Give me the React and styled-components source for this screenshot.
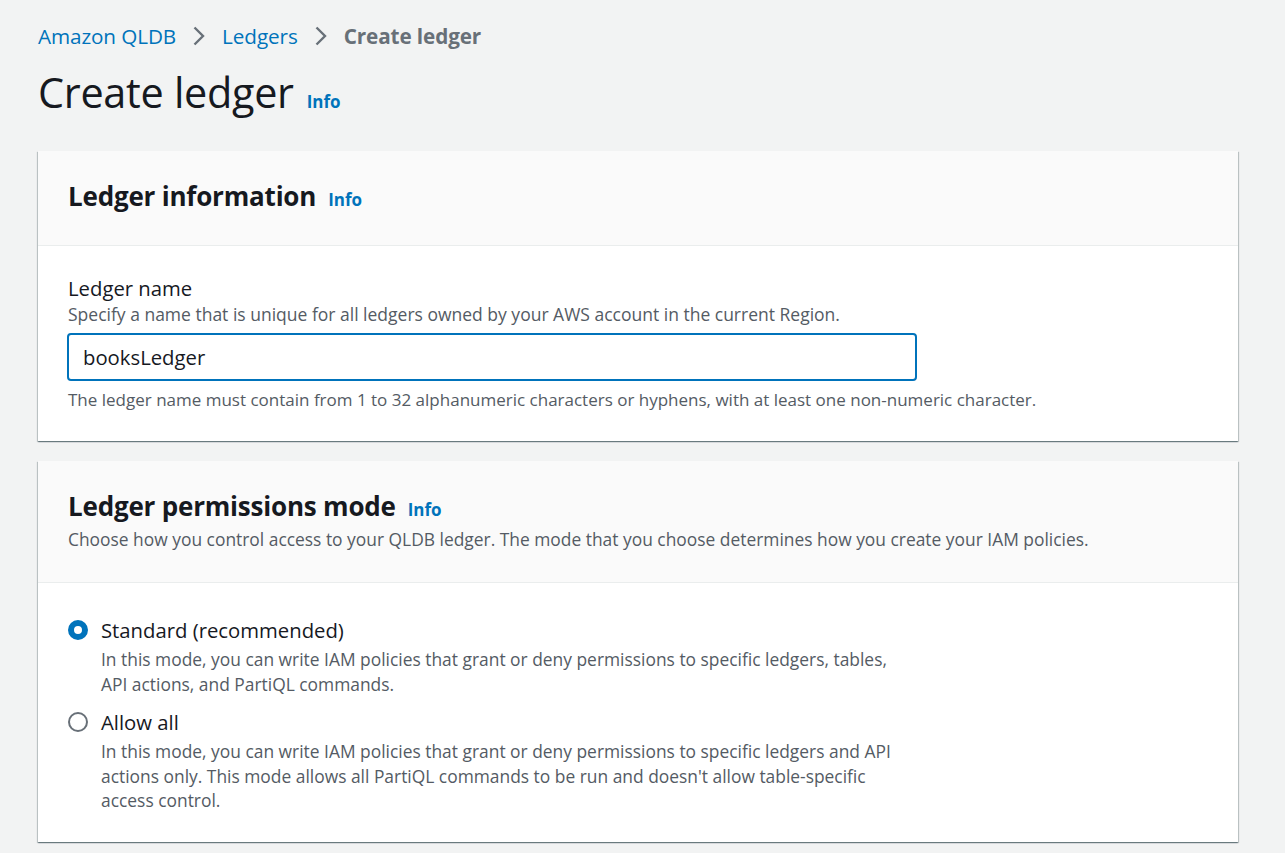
import React from "react";
import styled, { createGlobalStyle } from "styled-components";

const Global = createGlobalStyle`
  html, body { margin: 0; padding: 0; background: #f2f3f3; }
  body { font-family: "Open Sans", "Noto Sans", sans-serif; color: #16191f; -webkit-font-smoothing: antialiased; }
  * { box-sizing: border-box; }
`;

const Page = styled.div`
  padding: 21px 47px 12px 38px;
  display: flex;
  flex-direction: column;
`;

const Crumbs = styled.nav`
  display: flex;
  align-items: center;
  gap: 16px;
  height: 30px;
  font-size: 20.7px;
  letter-spacing: -0.1px;
`;

const CrumbLink = styled.a`
  color: #0073bb;
  text-decoration: none;
`;

const CrumbCurrent = styled.span`
  color: #687078;
  font-weight: 700;
`;

const Chevron = () => (
  <svg width="14" height="22" viewBox="0 0 14 22" fill="none">
    <polyline points="2.5,2.5 11,11 2.5,19.5" stroke="#687078" strokeWidth="2.4" strokeLinejoin="miter" />
  </svg>
);

const TitleRow = styled.div`
  display: flex;
  align-items: baseline;
  gap: 13px;
  margin-top: 13px;
  margin-bottom: 31px;
`;

const H1 = styled.h1`
  margin: 0;
  font-size: 41.4px;
  font-weight: 400;
  line-height: 56px;
  letter-spacing: -0.3px;
  color: #16191f;
`;

const Info = styled.a`
  color: #0073bb;
  font-weight: 700;
  font-size: 17px;
  text-decoration: none;
`;

const Card = styled.section`
  background: #fff;
  box-shadow: 0 1px 1px 0 rgba(0, 28, 36, 0.35), 1px 1px 1px 0 rgba(0, 28, 36, 0.18),
    -1px 1px 1px 0 rgba(0, 28, 36, 0.18);
  margin-bottom: 20px;
`;

const CardHeader = styled.header`
  background: #fafafa;
  border-bottom: 1px solid #eaeded;
  padding: ${(p) => p.$pad};
`;

const HeaderRow = styled.div`
  display: flex;
  align-items: baseline;
  gap: 12px;
`;

const H2 = styled.h2`
  margin: 0;
  font-size: 26px;
  font-weight: 700;
  line-height: 34px;
  letter-spacing: -0.2px;
`;

const HeaderDesc = styled.p`
  margin: 0;
  margin-top: 4px;
  font-size: 17.4px;
  line-height: 25px;
  color: #545b64;
`;

const CardBody = styled.div`
  padding: ${(p) => p.$pad};
`;

const Label = styled.label`
  display: block;
  font-size: 20.3px;
  line-height: 28px;
  color: #16191f;
`;

const Desc = styled.div`
  font-size: ${(p) => p.$size || "17.5px"};
  line-height: 25px;
  color: #545b64;
`;

const Input = styled.input`
  display: block;
  width: 850px;
  height: 48px;
  margin: 6px 0 6px -1px;
  padding: 0 14px;
  border: 2px solid #0073bb;
  border-radius: 4px;
  font-family: inherit;
  font-size: 20.3px;
  color: #16191f;
  outline: none;
  background: #fff;
`;

const RadioGroup = styled.div`
  display: flex;
  flex-direction: column;
  gap: 11px;
`;

const RadioItem = styled.div`
  display: grid;
  grid-template-columns: 20px 802px;
  column-gap: 13px;
`;

const RadioDot = styled.span`
  width: 20px;
  height: 20px;
  border-radius: 50%;
  margin-top: 5px;
  border: ${(p) => (p.$checked ? "6px solid #0073bb" : "2px solid #687078")};
  background: #fff;
`;

const RadioText = styled.div`
  display: flex;
  flex-direction: column;
`;

const RadioLabel = styled.span`
  font-size: 20.3px;
  line-height: 30px;
  color: #16191f;
`;

const RadioDesc = styled.span`
  margin-top: 2px;
  font-size: 17.4px;
  line-height: 24.5px;
  color: #545b64;
`;

export default function App() {
  return (
    <>
      <Global />
      <Page>
        <Crumbs>
          <CrumbLink href="#">Amazon QLDB</CrumbLink>
          <Chevron />
          <CrumbLink href="#">Ledgers</CrumbLink>
          <Chevron />
          <CrumbCurrent>Create ledger</CrumbCurrent>
        </Crumbs>
        <TitleRow>
          <H1>Create ledger</H1>
          <Info href="#">Info</Info>
        </TitleRow>

        <Card>
          <CardHeader $pad="28px 30px 32px">
            <HeaderRow>
              <H2>Ledger information</H2>
              <Info href="#">Info</Info>
            </HeaderRow>
          </CardHeader>
          <CardBody $pad="28px 30px 29px">
            <Label>Ledger name</Label>
            <Desc>Specify a name that is unique for all ledgers owned by your AWS account in the current Region.</Desc>
            <Input defaultValue="booksLedger" />
            <Desc $size="17px">
              The ledger name must contain from 1 to 32 alphanumeric characters or hyphens, with at least one
              non-numeric character.
            </Desc>
          </CardBody>
        </Card>

        <Card>
          <CardHeader $pad="28px 30px 30px">
            <HeaderRow>
              <H2>Ledger permissions mode</H2>
              <Info href="#">Info</Info>
            </HeaderRow>
            <HeaderDesc>
              Choose how you control access to your QLDB ledger. The mode that you choose determines how you create
              your IAM policies.
            </HeaderDesc>
          </CardHeader>
          <CardBody $pad="32px 30px 29px">
            <RadioGroup>
              <RadioItem>
                <RadioDot $checked />
                <RadioText>
                  <RadioLabel>Standard (recommended)</RadioLabel>
                  <RadioDesc>
                    In this mode, you can write IAM policies that grant or deny permissions to specific ledgers, tables,
                    API actions, and PartiQL commands.
                  </RadioDesc>
                </RadioText>
              </RadioItem>
              <RadioItem>
                <RadioDot />
                <RadioText>
                  <RadioLabel>Allow all</RadioLabel>
                  <RadioDesc>
                    In this mode, you can write IAM policies that grant or deny permissions to specific ledgers and API
                    actions only. This mode allows all PartiQL commands to be run and doesn't allow table-specific
                    access control.
                  </RadioDesc>
                </RadioText>
              </RadioItem>
            </RadioGroup>
          </CardBody>
        </Card>
      </Page>
    </>
  );
}
